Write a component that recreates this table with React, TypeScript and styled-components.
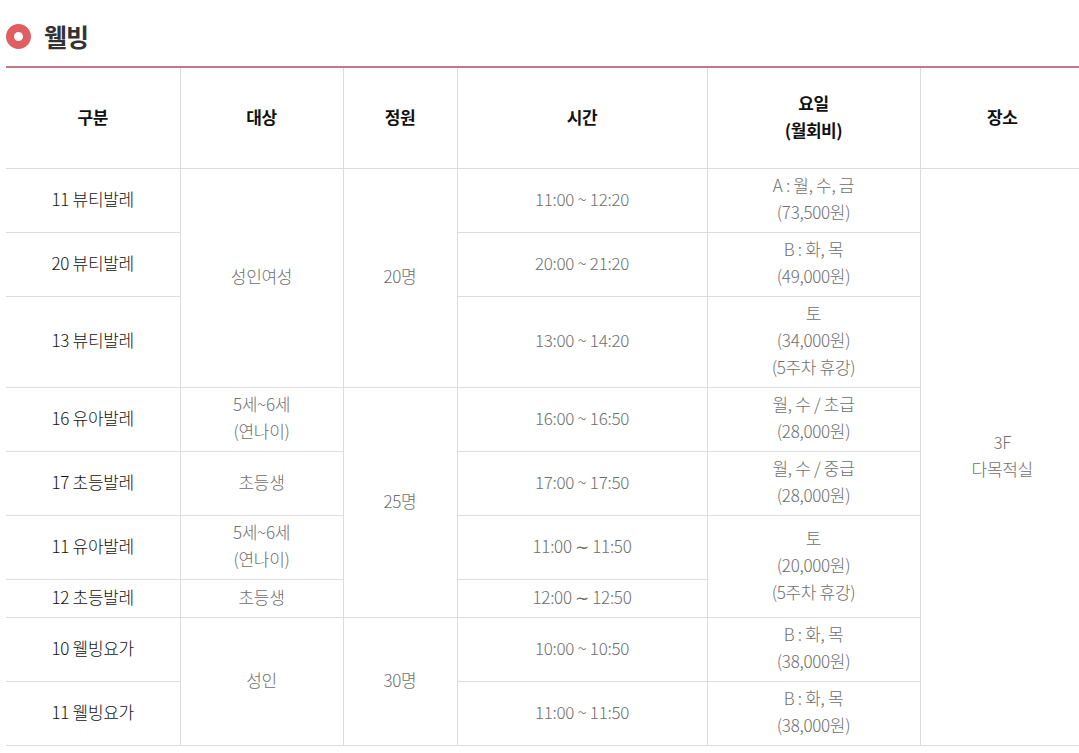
import React from "react";
import styled, { createGlobalStyle } from "styled-components";

const GlobalStyle = createGlobalStyle`
  html, body {
    margin: 0;
    padding: 0;
    background: #fff;
    overflow-x: hidden;
  }
  body {
    font-family: "Noto Sans CJK KR", "Noto Sans", sans-serif;
  }
`;

const Page = styled.div`
  padding: 19px 0 0 6px;
`;

const TitleRow = styled.h2`
  display: flex;
  align-items: center;
  gap: 13px;
  margin: 0 0 13px;
  height: 34px;
  font-size: 25px;
  font-weight: 700;
  color: #333;
  letter-spacing: -1px;
`;

const Bullet = styled.span`
  width: 9px;
  height: 9px;
  border-radius: 50%;
  border: 8px solid #e05d61;
  background: #fff;
  flex-shrink: 0;
`;

const Table = styled.table`
  width: 1078px;
  border-collapse: collapse;
  table-layout: fixed;
  border-top: 2px solid #c27b85;
`;

const Th = styled.th`
  height: 96px;
  padding: 0 5px 4px;
  font-size: 17px;
  font-weight: 700;
  line-height: 27px;
  color: #111;
  letter-spacing: -0.5px;
  border-bottom: 1px solid #dcdcdc;
  border-left: 1px solid #dcdcdc;
  &:first-child {
    border-left: none;
  }
`;

const Td = styled.td<{ $dark?: boolean }>`
  padding: 2px 5px 7px;
  font-size: 17px;
  font-weight: 300;
  line-height: 27px;
  letter-spacing: -0.3px;
  text-align: center;
  vertical-align: middle;
  color: ${(p) => (p.$dark ? "#111" : "#6e6e6e")};
  border-bottom: 1px solid #dcdcdc;
  border-left: 1px solid #dcdcdc;
  &:first-child {
    border-left: ${(p) => (p.$dark ? "none" : "1px solid #dcdcdc")};
  }
`;

const ShortRow = styled.tr`
  height: 38px;
`;

const cols = [174, 163, 114, 250, 213, 164];

const App: React.FC = () => {
  return (
    <Page>
      <GlobalStyle />
      <TitleRow>
        <Bullet />
        웰빙
      </TitleRow>
      <Table>
        <colgroup>
          {cols.map((w, i) => (
            <col key={i} style={{ width: w }} />
          ))}
        </colgroup>
        <thead>
          <tr>
            <Th>구분</Th>
            <Th>대상</Th>
            <Th>정원</Th>
            <Th>시간</Th>
            <Th>
              요일
              <br />
              (월회비)
            </Th>
            <Th>장소</Th>
          </tr>
        </thead>
        <tbody>
          <tr>
            <Td $dark>11 뷰티발레</Td>
            <Td rowSpan={3}>성인여성</Td>
            <Td rowSpan={3}>20명</Td>
            <Td>11:00 ~ 12:20</Td>
            <Td>
              A : 월, 수, 금
              <br />
              (73,500원)
            </Td>
            <Td rowSpan={9}>
              3F
              <br />
              다목적실
            </Td>
          </tr>
          <tr>
            <Td $dark>20 뷰티발레</Td>
            <Td>20:00 ~ 21:20</Td>
            <Td>
              B : 화, 목
              <br />
              (49,000원)
            </Td>
          </tr>
          <tr>
            <Td $dark>13 뷰티발레</Td>
            <Td>13:00 ~ 14:20</Td>
            <Td>
              토
              <br />
              (34,000원)
              <br />
              (5주차 휴강)
            </Td>
          </tr>
          <tr>
            <Td $dark>16 유아발레</Td>
            <Td>
              5세~6세
              <br />
              (연나이)
            </Td>
            <Td rowSpan={4}>25명</Td>
            <Td>16:00 ~ 16:50</Td>
            <Td>
              월, 수 / 초급
              <br />
              (28,000원)
            </Td>
          </tr>
          <tr>
            <Td $dark>17 초등발레</Td>
            <Td>초등생</Td>
            <Td>17:00 ~ 17:50</Td>
            <Td>
              월, 수 / 중급
              <br />
              (28,000원)
            </Td>
          </tr>
          <tr>
            <Td $dark>11 유아발레</Td>
            <Td>
              5세~6세
              <br />
              (연나이)
            </Td>
            <Td>11:00 ∼ 11:50</Td>
            <Td rowSpan={2}>
              토
              <br />
              (20,000원)
              <br />
              (5주차 휴강)
            </Td>
          </tr>
          <ShortRow>
            <Td $dark>12 초등발레</Td>
            <Td>초등생</Td>
            <Td>12:00 ∼ 12:50</Td>
          </ShortRow>
          <tr>
            <Td $dark>10 웰빙요가</Td>
            <Td rowSpan={2}>성인</Td>
            <Td rowSpan={2}>30명</Td>
            <Td>10:00 ~ 10:50</Td>
            <Td>
              B : 화, 목
              <br />
              (38,000원)
            </Td>
          </tr>
          <tr>
            <Td $dark>11 웰빙요가</Td>
            <Td>11:00 ~ 11:50</Td>
            <Td>
              B : 화, 목
              <br />
              (38,000원)
            </Td>
          </tr>
        </tbody>
      </Table>
    </Page>
  );
};

export default App;
